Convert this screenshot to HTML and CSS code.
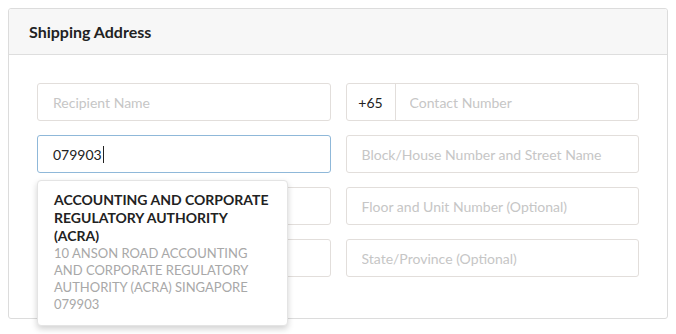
FILE: index.html
```html
<!DOCTYPE html>
<html lang="en">
<head>
    <meta charset="UTF-8">
    <meta name="viewport" content="width=device-width, initial-scale=1.0">
    <title>Shipping Address</title>
    <link rel="stylesheet" href="styles.css">
</head>
<body>
    <div class="panel">
        <div class="panel-heading">
            <h3>Shipping Address</h3>
        </div>
        <div class="panel-body">
            <form class="address-form">
                <input type="text" class="field" placeholder="Recipient Name">
                <div class="field phone">
                    <span class="addon">+65</span>
                    <input type="text" placeholder="Contact Number">
                </div>
                <div class="postcode">
                    <div class="field focused">079903<span class="caret"></span></div>
                    <ul class="suggestions">
                        <li>
                            <strong>ACCOUNTING AND CORPORATE REGULATORY AUTHORITY (ACRA)</strong>
                            <span>10 ANSON ROAD ACCOUNTING AND CORPORATE REGULATORY AUTHORITY (ACRA) SINGAPORE 079903</span>
                        </li>
                    </ul>
                </div>
                <input type="text" class="field" placeholder="Block/House Number and Street Name">
                <input type="text" class="field" placeholder="City">
                <input type="text" class="field" placeholder="Floor and Unit Number (Optional)">
                <input type="text" class="field" placeholder="Country">
                <input type="text" class="field" placeholder="State/Province (Optional)">
            </form>
        </div>
    </div>
</body>
</html>
```

FILE: styles.css
```css
/* General Reset */
* {
    margin: 0;
    padding: 0;
    box-sizing: border-box;
}

html,
body {
    min-height: 334px;
}

body {
    font-family: Lato, 'Open Sans', sans-serif;
    background-color: #fff;
    color: #333;
    padding: 8px;
}

/* Panel */
.panel {
    width: 660px;
    border: 1px solid #dcdcdc;
    border-radius: 3px;
    background-color: #fff;
}

.panel-heading {
    background-color: #f7f7f7;
    border-bottom: 1px solid #dedede;
    height: 46px;
    padding: 0 20px;
    display: flex;
    align-items: center;
    border-radius: 3px 3px 0 0;
}

.panel-heading h3 {
    font-size: 16px;
    font-weight: bold;
    color: #222;
}

.panel-body {
    padding: 28px 28px 41px;
}

/* Form grid */
.address-form {
    display: grid;
    grid-template-columns: 1fr 1fr;
    column-gap: 15px;
    row-gap: 14px;
}

.field {
    height: 38px;
    border: 1px solid #e2dedb;
    border-radius: 3px;
    padding: 0 15px;
    font-family: inherit;
    font-size: 14px;
    color: #333;
    background: #fff;
    width: 100%;
    outline: none;
}

.field::placeholder {
    color: #c6c6c6;
}

.phone {
    display: flex;
    padding: 0;
}

.phone .addon {
    width: 49px;
    display: flex;
    align-items: center;
    justify-content: center;
    border-right: 1px solid #e2dedb;
    font-size: 14px;
    color: #222;
}

.phone input {
    flex: 1;
    border: none;
    outline: none;
    padding: 0 14px;
    font-family: inherit;
    font-size: 14px;
    background: transparent;
}

.phone input::placeholder {
    color: #c6c6c6;
}

/* Postcode with suggestions */
.postcode {
    position: relative;
}

.focused {
    border-color: #8fb8d9;
    display: flex;
    align-items: center;
    color: #222;
}

.caret {
    display: inline-block;
    width: 1px;
    height: 17px;
    background: #222;
    margin-left: 1px;
}

.suggestions {
    list-style: none;
    position: absolute;
    top: 45px;
    left: 0;
    width: 251px;
    background: #fff;
    border: 1px solid #e4e4e4;
    border-radius: 4px;
    box-shadow: 0 3px 6px rgba(0, 0, 0, 0.18);
    padding: 10px 16px 12px 16px;
    z-index: 10;
}

.suggestions li strong {
    display: block;
    font-size: 14px;
    font-weight: bold;
    line-height: 18px;
    color: #222;
}

.suggestions li span {
    display: block;
    font-size: 13px;
    line-height: 17px;
    color: #a8a8a8;
}
```
